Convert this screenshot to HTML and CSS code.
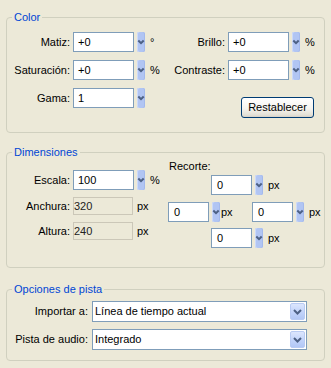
FILE: index.html
```html
<!DOCTYPE html>
<html lang="es">
<head>
    <meta charset="UTF-8">
    <title>Ajustes de clip</title>
    <link rel="stylesheet" href="styles.css">
</head>
<body>
    <fieldset class="group g-color">
        <legend>Color</legend>
        <div class="color-grid">
            <span class="lbl">Matiz:</span>
            <div class="spin"><span class="box">+0</span><span class="arr"><svg width="8" height="20"><path d="M1.3 8.5 L4 11.2 L6.7 8.5" /></svg></span><span class="unit">°</span></div>
            <span class="lbl">Brillo:</span>
            <div class="spin"><span class="box">+0</span><span class="arr"><svg width="8" height="20"><path d="M1.3 8.5 L4 11.2 L6.7 8.5" /></svg></span><span class="unit">%</span></div>

            <span class="lbl">Saturación:</span>
            <div class="spin"><span class="box">+0</span><span class="arr"><svg width="8" height="20"><path d="M1.3 8.5 L4 11.2 L6.7 8.5" /></svg></span><span class="unit">%</span></div>
            <span class="lbl">Contraste:</span>
            <div class="spin"><span class="box">+0</span><span class="arr"><svg width="8" height="20"><path d="M1.3 8.5 L4 11.2 L6.7 8.5" /></svg></span><span class="unit">%</span></div>

            <span class="lbl top">Gama:</span>
            <div class="spin top"><span class="box">1</span><span class="arr"><svg width="8" height="20"><path d="M1.3 8.5 L4 11.2 L6.7 8.5" /></svg></span></div>
            <button class="btn">Restablecer</button>
        </div>
    </fieldset>

    <fieldset class="group g-dim">
        <legend>Dimensiones</legend>
        <div class="dim">
            <div class="dim-left">
                <span class="lbl">Escala:</span>
                <div class="spin"><span class="box">100</span><span class="arr"><svg width="8" height="20"><path d="M1.3 8.5 L4 11.2 L6.7 8.5" /></svg></span><span class="unit">%</span></div>
                <span class="lbl">Anchura:</span>
                <div class="spin"><span class="ro">320</span><span class="unit px">px</span></div>
                <span class="lbl">Altura:</span>
                <div class="spin"><span class="ro">240</span><span class="unit px">px</span></div>
            </div>
            <div class="crop">
                <span class="crop-title">Recorte:</span>
                <div class="crop-row mid-pad">
                    <div class="spin"><span class="box small">0</span><span class="arr"><svg width="8" height="20"><path d="M1.3 8.5 L4 11.2 L6.7 8.5" /></svg></span><span class="unit">px</span></div>
                </div>
                <div class="crop-row">
                    <div class="spin left"><span class="box small">0</span><span class="arr"><svg width="8" height="20"><path d="M1.3 8.5 L4 11.2 L6.7 8.5" /></svg></span><span class="unit tight">px</span></div>
                    <div class="spin"><span class="box small">0</span><span class="arr"><svg width="8" height="20"><path d="M1.3 8.5 L4 11.2 L6.7 8.5" /></svg></span><span class="unit">px</span></div>
                </div>
                <div class="crop-row mid-pad">
                    <div class="spin"><span class="box small">0</span><span class="arr"><svg width="8" height="20"><path d="M1.3 8.5 L4 11.2 L6.7 8.5" /></svg></span><span class="unit">px</span></div>
                </div>
            </div>
        </div>
    </fieldset>

    <fieldset class="group g-track">
        <legend>Opciones de pista</legend>
        <div class="track-grid">
            <span class="lbl">Importar a:</span>
            <div class="select"><span>Línea de tiempo actual</span><span class="sel-arr"><svg width="15" height="17"><path d="M4 7 L7.5 10.5 L11 7" /></svg></span></div>
            <span class="lbl">Pista de audio:</span>
            <div class="select"><span>Integrado</span><span class="sel-arr"><svg width="15" height="17"><path d="M4 7 L7.5 10.5 L11 7" /></svg></span></div>
        </div>
    </fieldset>
</body>
</html>
```

FILE: styles.css
```css
*{
    margin: 0;
    padding: 0;
    box-sizing: border-box;
}
body{
    width: 331px;
    height: 368px;
    overflow: hidden;
    background: #ECE9D8;
    font: 11px/13px "Liberation Sans", Arial, sans-serif;
    color: #000;
}
.group{
    border: 1px solid #D0D0BF;
    border-radius: 4px;
    margin: 0 6px;
}
.group legend{
    color: #0046D5;
    margin-left: 5px;
    padding: 0 2px;
    line-height: 14px;
}
.g-color{
    margin-top: 10px;
}
.g-dim{
    margin-top: 12px;
}
.g-track{
    margin-top: 14px;
}

/* etiquetas */
.lbl{
    text-align: right;
    padding-right: 3px;
    align-self: center;
    white-space: nowrap;
}
.top{
    align-self: start;
}
.lbl.top{
    line-height: 20px;
}

/* campo con flecha */
.spin{
    display: flex;
    align-items: center;
}
.box{
    width: 61px;
    height: 20px;
    border: 1px solid #7F9DB9;
    background: #fff;
    padding-left: 4px;
    line-height: 18px;
}
.box.small{
    width: 41px;
    padding-left: 5px;
}
.arr{
    display: block;
    flex: none;
    width: 8px;
    height: 20px;
    margin-left: 3px;
    border-radius: 2px;
    background: #B1C5F3;
    box-shadow: inset 1px 0 #CCDAFA, inset -1px 0 #A3B9EC;
}
.arr svg, .sel-arr svg{
    display: block;
}
.arr path, .sel-arr path{
    fill: none;
    stroke: #4D6185;
    stroke-width: 2;
}
.unit{
    margin-left: 5px;
}
.unit.tight{
    margin-left: 1px;
}
.ro{
    width: 60px;
    height: 18px;
    border: 1px solid #CBC7B8;
    line-height: 16px;
    color: #222;
}
.unit.px{
    margin-left: 4px;
}

/* Color */
.color-grid{
    display: grid;
    grid-template-columns: 66px 100px 55px 1fr;
    grid-auto-rows: minmax(20px, auto);
    row-gap: 8px;
    padding: 8px 0 14px;
}
.btn{
    grid-column: 3 / 5;
    justify-self: end;
    align-self: start;
    width: 73px;
    height: 21px;
    margin: 9px 10px 0 0;
    border: 1px solid #003C74;
    border-radius: 3px;
    background: linear-gradient(#FFFFFF, #F5F4EF 55%, #E3E0D6 90%, #D6D0C5);
    font: inherit;
    color: #000;
}

/* Dimensiones */
.dim{
    display: flex;
    padding: 1px 0 19px;
}
.dim-left{
    display: grid;
    grid-template-columns: 66px 95px;
    grid-template-rows: 20px 18px 18px;
    row-gap: 7px;
    padding-top: 10px;
}
.crop{
    display: flex;
    flex-direction: column;
}
.crop-title{
    padding-left: 1px;
    margin-bottom: 2px;
}
.crop-row{
    display: flex;
    margin-top: 6px;
}
.crop-title + .crop-row{
    margin-top: 0;
}
.crop-row:nth-child(3){
    margin-top: 7px;
}
.mid-pad{
    padding-left: 43px;
}
.spin.left{
    width: 84px;
}

/* Opciones de pista */
.track-grid{
    display: grid;
    grid-template-columns: 85px 215px;
    row-gap: 7px;
    padding: 5px 0 10px;
}
.track-grid .lbl{
    padding-right: 4px;
}
.select{
    height: 21px;
    border: 1px solid #7F9DB9;
    background: #fff;
    display: flex;
    align-items: center;
    justify-content: space-between;
    padding: 0 1px 0 2px;
}
.sel-arr{
    width: 15px;
    height: 17px;
    border: 1px solid #B9CBF3;
    border-radius: 2px;
    background: linear-gradient(#DCE6FD, #C0D2FA 60%, #B2C7F5);
}
.sel-arr svg{
    margin: -1px 0 0 -1px;
}
```
